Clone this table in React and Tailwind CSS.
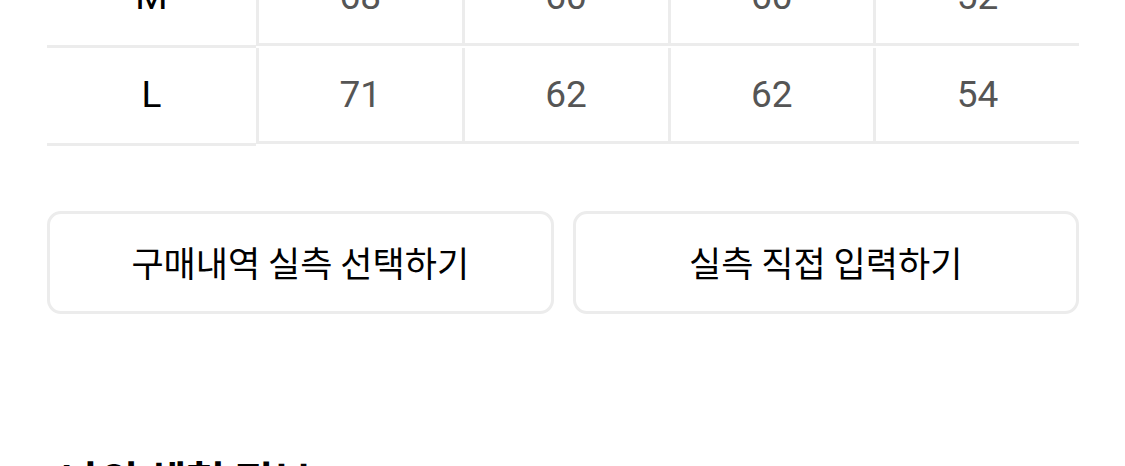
const rows = [
  { size: "M", values: ["68", "60", "60", "52"] },
  { size: "L", values: ["71", "62", "62", "54"] },
];

const SizeRow = ({ row }) => {
  return (
    <div className="flex items-start h-[98px]">
      {/* 사이즈명 */}
      <div className="w-[209px] h-[98px] flex items-center justify-center border-b-[3px] border-[#ececec] text-[37px] font-normal text-black pb-[2px]">
        {row.size}
      </div>
      {/* 실측값 */}
      {row.values.map((v, i) => (
        <div
          key={i}
          className="flex-1 h-[96px] flex items-center justify-center border-l-[3px] border-b-[3px] border-[#ececec] text-[37px] text-[#555555]"
        >
          {v}
        </div>
      ))}
    </div>
  );
};

export default function App() {
  return (
    <div
      className="h-[466px] overflow-hidden bg-white px-[47px]"
      style={{ fontFamily: 'Roboto, "Noto Sans CJK KR", sans-serif' }}
    >
      {/* 사이즈 표 */}
      <div className="w-[1032px] mt-[-50px]">
        {rows.map((row) => (
          <SizeRow key={row.size} row={row} />
        ))}
      </div>

      {/* 버튼 */}
      <div className="flex gap-[19px] mt-[65px] w-[1032px]">
        <button className="flex-1 h-[103px] rounded-[14px] border-[3px] border-[#ececec] bg-white text-[35px] font-normal text-black" style={{ fontFamily: '"Noto Sans CJK KR", sans-serif' }}>
          구매내역 실측 선택하기
        </button>
        <button className="flex-1 h-[103px] rounded-[14px] border-[3px] border-[#ececec] bg-white text-[35px] font-normal text-black" style={{ fontFamily: '"Noto Sans CJK KR", sans-serif' }}>
          실측 직접 입력하기
        </button>
      </div>

      {/* 다음 섹션 제목 */}
      <h2
        className="mt-[140px] text-[42px] font-bold text-black leading-[1.2] pl-[14px]"
        style={{ fontFamily: '"Noto Sans CJK KR", sans-serif' }}
      >
        나의 체형 정보
      </h2>
    </div>
  );
}
